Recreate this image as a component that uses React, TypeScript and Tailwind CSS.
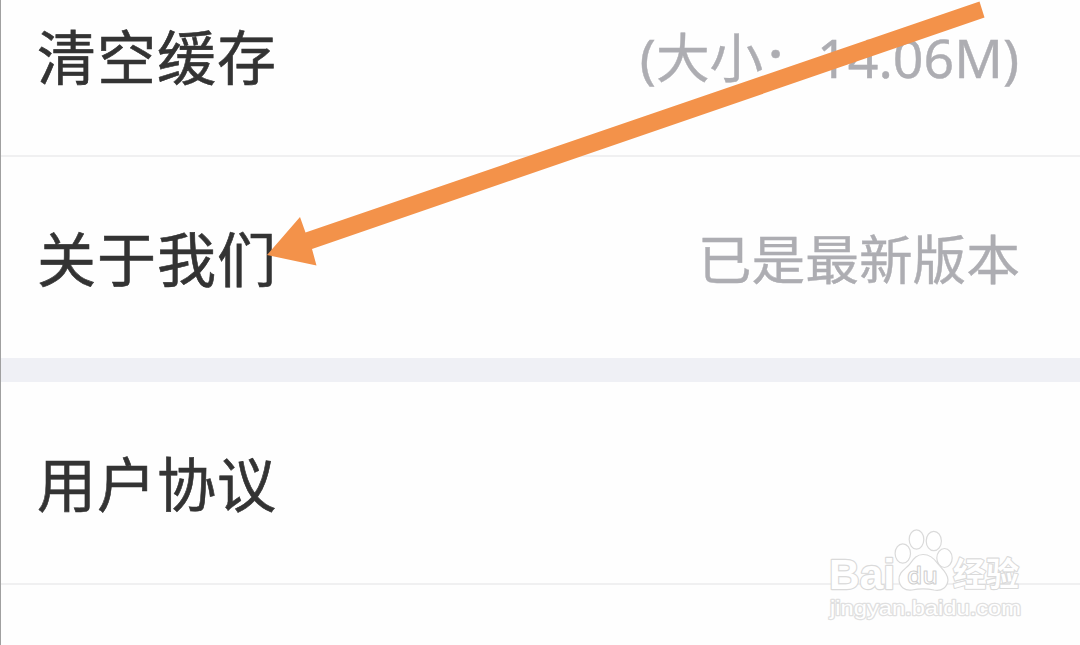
import type { ReactNode } from "react";

const Row = ({ label, value, className = "" }: { label: string; value?: ReactNode; className?: string }) => {
    return (
        <div className={`flex items-center justify-between pl-[36px] pr-[60px] ${className}`}>
            <span className="text-[59px] leading-none tracking-[1px] text-[#333333] [-webkit-text-stroke:0.6px_#333333]">
                {label}
            </span>
            {value && (
                <span className="text-[53.7px] leading-none text-[#adadb2] [-webkit-text-stroke:0.4px_#adadb2]">
                    {value}
                </span>
            )}
        </div>
    );
};

const CacheSize = () => {
    return (
        <span className="mr-[1px] block pt-[3px]">
            <span className="font-['Noto_Sans',sans-serif]">(</span>
            大小
            <span className="inline-block -translate-x-[1px] translate-y-[6px]">：</span>
            <span className="font-['Noto_Sans',sans-serif]">14.06M)</span>
        </span>
    );
};

const Watermark = () => {
    return (
        <svg
            className="absolute left-[809px] top-[515px]"
            width="230"
            height="120"
            viewBox="0 0 230 120"
            fill="#ffffff"
            stroke="#dadada"
            strokeWidth="1.2"
            strokeLinejoin="round"
        >
            <text
                x="19"
                y="73.500"
                fontSize="43"
                fontWeight="700"
                strokeWidth="2.4"
                paintOrder="stroke"
                fontFamily='"Liberation Sans", Arial, sans-serif'
                textLength="66"
                lengthAdjust="spacingAndGlyphs"
            >
                Bai
            </text>

            {/* Paw */}
            <ellipse cx="92.800" cy="38.500" rx="7.700" ry="9.700" />
            <ellipse cx="106.500" cy="24.500" rx="7.300" ry="9.700" />
            <ellipse cx="123.800" cy="26" rx="7.600" ry="9.700" />
            <ellipse cx="134.500" cy="43" rx="7.700" ry="9.500" />
            <path d="M113 39.500C106 39.500 103 45 99 50C94 55 88.500 58 89 65C89.500 72 95 76 102 75C109 73.500 117 73.500 124 75C132 76.500 137.500 72 138 65C138 58 132 54 128 49C124 43 120 39.500 113 39.500Z" />
            <text
                x="97"
                y="69"
                fontSize="24"
                fontWeight="600"
                stroke="#cfcfcf"
                strokeWidth="1"
                fontFamily='"Open Sans", sans-serif'
                textLength="31"
                lengthAdjust="spacingAndGlyphs"
            >
                du
            </text>

            <text
                x="143"
                y="71"
                fontSize="33"
                fontWeight="700"
                strokeWidth="2.2"
                paintOrder="stroke"
                fontFamily='"Noto Sans CJK SC", sans-serif'
                textLength="66"
                lengthAdjust="spacingAndGlyphs"
            >
                经验
            </text>
            <text
                x="20"
                y="100"
                fontSize="21"
                fontWeight="400"
                stroke="#e0e0e0"
                strokeWidth="2.4"
                paintOrder="stroke"
                fontFamily='"Liberation Sans", Arial, sans-serif'
                textLength="191"
                lengthAdjust="spacingAndGlyphs"
            >
                jingyan.baidu.com
            </text>
        </svg>
    );
};

export default function App() {
    return (
        <div className="relative h-[645px] w-[1080px] overflow-hidden border-l border-[#a0a0a0] bg-[#fefefe] font-['Noto_Sans_CJK_SC',sans-serif]">
            <Row label="清空缓存" value={<CacheSize />} className="h-[155px] pb-[46px]" />
            <div className="h-[2px] bg-[#f0f0f1]" />
            <Row label="关于我们" value="已是最新版本" className="h-[201px] pb-[2px]" />

            {/* Section gap */}
            <div className="h-6 bg-[#eff0f5]" />

            <Row label="用户协议" className="h-[201px] pb-[2px]" />
            <div className="h-[2px] bg-[#f0f0f1]" />

            <Watermark />

            {/* Arrow */}
            <svg className="absolute -left-px top-0" width="1080" height="645" viewBox="0 0 1080 645" fill="#f3924a">
                <path d="M979.500 1.500L984.500 17.500L312 249L316.500 265.500L267 255L300 217L305.500 232.500Z" />
            </svg>
        </div>
    );
}
